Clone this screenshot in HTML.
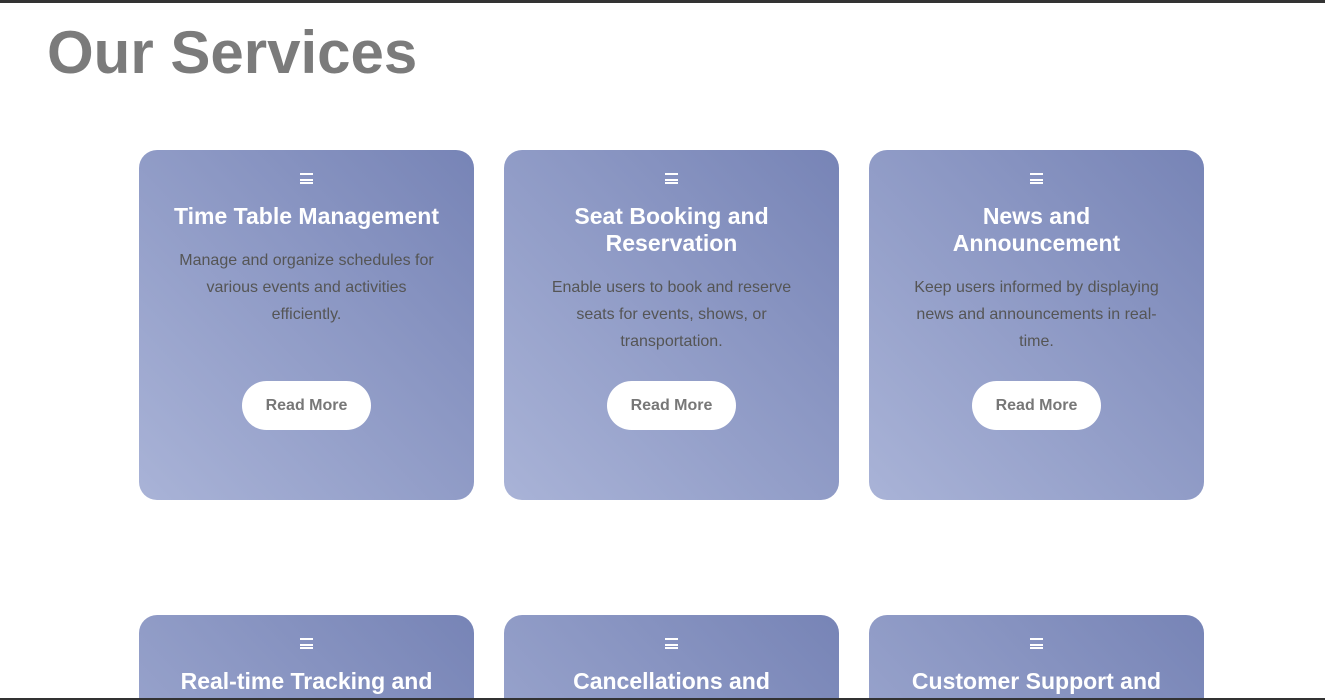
<!DOCTYPE html>
<html style="height:700px;overflow:hidden"><head><style>
html,body{margin:0;padding:0}
body{width:1325px;height:700px;overflow:hidden;position:relative;background:#fff;font-family:"Liberation Sans",Arial,sans-serif}
.top{position:absolute;left:0;right:0;top:0;height:3px;background:#333}
h1{position:absolute;left:47px;top:18px;margin:0;font-size:60px;font-weight:bold;color:#7b7b7b;line-height:70px}
.card{position:absolute;width:335px;height:350px;border-radius:18px;background:linear-gradient(to top right,#a9b3d7,#7784b6);background-size:335px 350px;background-position:0 0;background-repeat:no-repeat;text-align:center;color:#fff;overflow:hidden}
.ic{position:absolute;top:23px;left:161px;width:13px;height:11px;border-top:2px solid #fff;border-bottom:2px solid #fff;box-sizing:border-box}
.ic:after{content:"";position:absolute;left:0;right:0;top:3.5px;height:2px;background:#fff}
.t{position:absolute;top:53px;left:20px;right:20px;font-size:23px;font-weight:bold;line-height:27px}
.d{margin:0 auto;width:260px;font-size:16px;line-height:27px;color:#555;font-weight:normal}
.btn{position:absolute;left:103px;top:231px;width:129px;height:49px;border-radius:25px;background:#fff;color:#777;font-weight:bold;font-size:16px;line-height:49px}
.bot{position:absolute;left:0;right:0;top:698px;height:2px;background:#333}
</style></head><body>
<div class="top"></div>
<h1>Our Services</h1>

<div class="card" style="left:139px;top:150px"><div class="ic"></div><div class="t">Time Table Management<div class="d" style="margin-top:17px">Manage and organize schedules for various events and activities efficiently.</div></div><div class="btn">Read More</div></div>
<div class="card" style="left:504px;top:150px"><div class="ic"></div><div class="t">Seat Booking and Reservation<div class="d" style="margin-top:17px">Enable users to book and reserve seats for events, shows, or transportation.</div></div><div class="btn">Read More</div></div>
<div class="card" style="left:869px;top:150px"><div class="ic"></div><div class="t" style="left:70px;right:70px">News and Announcement<div class="d" style="margin-top:17px;margin-left:-40px;margin-right:-40px;width:auto;padding:0 4px">Keep users informed by displaying news and announcements in real-time.</div></div><div class="btn">Read More</div></div>

<div class="card" style="left:139px;top:615px;height:85px;border-radius:18px 18px 0 0"><div class="ic"></div><div class="t">Real-time Tracking and</div></div>
<div class="card" style="left:504px;top:615px;height:85px;border-radius:18px 18px 0 0"><div class="ic"></div><div class="t">Cancellations and</div></div>
<div class="card" style="left:869px;top:615px;height:85px;border-radius:18px 18px 0 0"><div class="ic"></div><div class="t">Customer Support and</div></div>
<div class="bot"></div>
</body></html>
